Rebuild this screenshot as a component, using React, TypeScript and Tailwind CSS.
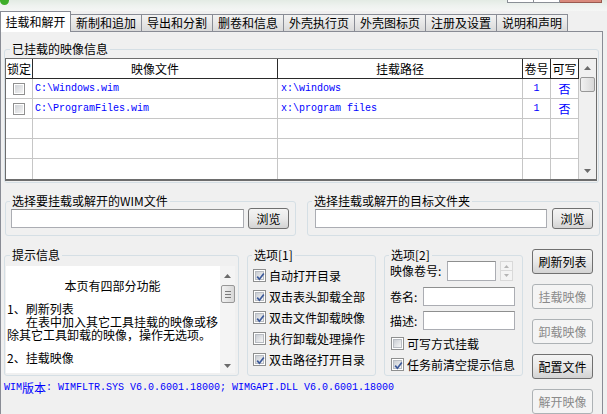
import React from 'react';

const tabs = ['挂载和解开', '新制和追加', '导出和分割', '删卷和信息', '外壳执行页', '外壳图标页', '注册及设置', '说明和声明'];

const images = [
  { file: 'C:\\Windows.wim', path: 'x:\\windows', vol: '1', rw: '否' },
  { file: 'C:\\ProgramFiles.wim', path: 'x:\\program files', vol: '1', rw: '否' },
  null,
  null,
  null,
];

const Check = ({ on }: { on?: boolean }) => (
  <span className="relative flex h-[13px] w-[13px] shrink-0 items-center justify-center border border-[#8e8f8f] bg-white">
    <span className="h-[9px] w-[9px] border border-[#b8bcc2] bg-linear-to-br from-[#c9cdd3] to-[#f6f6f6]" />
    {on && (
      <svg className="absolute left-[1px] top-[1px]" width="11" height="11" viewBox="0 0 11 11">
        <path d="M2.2 5.6 L4.4 8.2 L8.8 2.4" fill="none" stroke="#3d5a9a" strokeWidth="1.7" />
      </svg>
    )}
  </span>
);

const Arrow = ({ up }: { up?: boolean }) => (
  <svg width="7" height="4" viewBox="0 0 7 4">
    <path d={up ? 'M0 4 L3.5 0 L7 4 Z' : 'M0 0 L3.5 4 L7 0 Z'} fill="#6b6b6b" />
  </svg>
);

const Btn = ({ label, off }: { label: string; off?: boolean }) =>
  off ? (
    <div className="flex h-[25px] w-[61px] items-center justify-center rounded-[3px] border border-[#adb2b5] bg-[#f4f4f4] text-[#8a8a8a]">
      {label}
    </div>
  ) : (
    <div className="flex h-[25px] w-[61px] items-center justify-center rounded-[3px] border border-[#707070] bg-linear-to-b from-[#f4f4f4] via-[#e9e9e9] to-[#d3d3d3] text-black">
      {label}
    </div>
  );

const Browse = () => (
  <div className="flex h-[21px] w-[41px] items-center justify-center rounded-[3px] border border-[#707070] bg-linear-to-b from-[#f4f4f4] via-[#e9e9e9] to-[#d3d3d3]">
    浏览
  </div>
);

export default function App() {
  return (
    <div className="flex h-[414px] w-[607px] flex-col overflow-hidden bg-[#f0f0f0] font-['Noto_Sans_CJK_SC',sans-serif] text-[12px] leading-[14px] text-black">
      {/* window title remnant */}
      <div className="flex h-[12px] items-start bg-linear-to-b from-[#e3ebe4] via-[#eef2ef] to-[#f5f6f5]">
        <span className="mt-[-4px] h-[9px] w-[9px] rounded-full bg-[#3fae2a]" />
        <div className="ml-auto mr-[5px] flex h-[3px]">
          <span className="w-[27px] border border-t-0 border-[#8a8f96] bg-white" />
          <span className="w-[26px] border border-l-0 border-t-0 border-[#8a8f96] bg-white" />
          <span className="w-[42px] border border-l-0 border-t-0 border-[#9a5a50] bg-[#d98a7c]" />
        </div>
      </div>

      {/* tabs */}
      <div className="flex h-[20px] items-end">
        {tabs.map((t, i) =>
          i === 0 ? (
            <div key={t} className="relative z-10 -mb-px flex h-[21px] w-[71px] items-center justify-center border border-b-0 border-[#898c95] bg-white">
              {t}
            </div>
          ) : (
            <div key={t} className="flex h-[17px] w-[71px] items-center justify-center border border-b-0 border-l-0 border-[#898c95] bg-linear-to-b from-[#f3f3f3] to-[#dadada]">
              {t}
            </div>
          )
        )}
      </div>

      {/* panel */}
      <div className="flex w-[603px] flex-1 flex-col border border-b-0 border-[#898c95] bg-[#f0f0f0]">
        <fieldset className="ml-[3px] mt-[10px] w-[595px] rounded-[3px] border border-[#d5dfe5] pb-[1px]">
          <legend className="ml-[5px] px-[2px] leading-[14px]">已挂载的映像信息</legend>
          <div className="mt-[2px] flex w-[592px] border border-b-2 border-[#6d6d6d] bg-white">
            <div className="flex flex-1 flex-col">
              <div className="flex h-[20px] border-b border-[#2a2a2a] leading-[19px]">
                <div className="w-[27px] border-r border-[#2a2a2a] text-center">锁定</div>
                <div className="w-[245px] border-r border-[#2a2a2a] text-center">映像文件</div>
                <div className="w-[245px] border-r border-[#2a2a2a] text-center">挂载路径</div>
                <div className="w-[28px] border-r border-[#2a2a2a] text-center">卷号</div>
                <div className="w-[28px] border-r border-[#2a2a2a] text-center">可写</div>
              </div>
              {images.map((r, i) => (
                <div key={i} className={i < 4 ? 'flex h-[20px] border-b border-[#c6c6c6]' : 'flex h-[20px]'}>
                  <div className="flex w-[27px] items-center justify-center border-r border-[#c6c6c6]">
                    {r && (
                      <span className="flex h-[12px] w-[12px] items-center justify-center border border-[#909090] bg-white">
                        <span className="h-[8px] w-[8px] bg-linear-to-br from-[#cfd2d6] to-[#f4f4f4]" />
                      </span>
                    )}
                  </div>
                  <div className="flex w-[245px] items-center border-r border-[#c6c6c6] pl-[2px] font-['Liberation_Mono',monospace] text-[10px] text-[#0000ff]">
                    {r?.file}
                  </div>
                  <div className="flex w-[245px] items-center whitespace-pre border-r border-[#c6c6c6] pl-[3px] font-['Liberation_Mono',monospace] text-[10px] text-[#0000ff]">
                    {r?.path}
                  </div>
                  <div className="flex w-[28px] items-center justify-center border-r border-[#c6c6c6] font-['Liberation_Mono',monospace] text-[10px] text-[#0000ff]">
                    {r?.vol}
                  </div>
                  <div className="flex w-[28px] items-center justify-center border-r border-[#c6c6c6] text-[#0000ff]">
                    {r?.rw}
                  </div>
                </div>
              ))}
            </div>
            <div className="flex w-[17px] flex-col items-center bg-[#f0f0f0]">
              <div className="flex h-[18px] items-center">
                <Arrow up />
              </div>
              <div className="h-[15px] w-[15px] rounded-[2px] border border-[#979797] bg-linear-to-r from-[#f1f1f1] to-[#d8d8d8]" />
              <div className="mt-auto flex h-[17px] items-center">
                <Arrow />
              </div>
            </div>
          </div>
        </fieldset>

        <div className="mt-[11px] flex">
          <fieldset className="ml-[4px] w-[291px] rounded-[3px] border border-[#d5dfe5] pb-[6px]">
            <legend className="ml-[4px] px-[2px] leading-[14px]">选择要挂载或解开的WIM文件</legend>
            <div className="flex h-[21px] items-center gap-[4px] pl-[5px]">
              <div className="h-[19px] w-[233px] border border-[#abadb3] border-t-[#8e8f8f] bg-white" />
              <Browse />
            </div>
          </fieldset>
          <fieldset className="ml-[11px] w-[293px] rounded-[3px] border border-[#d5dfe5] pb-[6px]">
            <legend className="ml-[4px] px-[2px] leading-[14px]">选择挂载或解开的目标文件夹</legend>
            <div className="flex h-[21px] items-center gap-[5px] pl-[7px]">
              <div className="h-[19px] w-[232px] border border-[#abadb3] border-t-[#8e8f8f] bg-white" />
              <Browse />
            </div>
          </fieldset>
        </div>

        <div className="mt-[12px] flex pl-[3px]">
          <div className="flex flex-col">
            <div className="flex gap-[8px]">
              <fieldset className="h-[128px] w-[235px] rounded-[3px] border border-[#d5dfe5]">
                <legend className="ml-[5px] px-[2px] leading-[14px]">提示信息</legend>
                <div className="ml-[1px] mt-[4px] flex h-[107px] w-[229px] bg-white">
                  <div className="flex-1 overflow-hidden whitespace-nowrap pl-[1px] pt-[13px] leading-[13px]">
                    <div className="pr-[2px] text-center">本页有四部分功能</div>
                    <div className="h-[10px]" />
                    <div>1、刷新列表</div>
                    <div className="pl-[19px]">在表中加入其它工具挂载的映像或移</div>
                    <div>除其它工具卸载的映像，操作无选项。</div>
                    <div className="h-[10px]" />
                    <div>2、挂载映像</div>
                  </div>
                  <div className="flex w-[15px] flex-col items-center bg-[#f4f4f4]">
                    <div className="flex h-[19px] items-center">
                      <Arrow up />
                    </div>
                    <div className="flex h-[18px] w-[14px] flex-col items-center justify-center gap-[2px] rounded-[2px] border border-[#979797] bg-linear-to-r from-[#f1f1f1] to-[#d8d8d8]">
                      <span className="h-px w-[6px] bg-[#7a7a7a]" />
                      <span className="h-px w-[6px] bg-[#7a7a7a]" />
                      <span className="h-px w-[6px] bg-[#7a7a7a]" />
                    </div>
                    <div className="mt-auto flex h-[14px] items-center">
                      <Arrow />
                    </div>
                  </div>
                </div>
              </fieldset>

              <fieldset className="h-[128px] w-[129px] rounded-[3px] border border-[#d5dfe5]">
                <legend className="ml-[4px] px-[2px] leading-[14px]">选项[1]</legend>
                <div className="mt-[3px] flex flex-col pl-[5px]">
                  {[
                    ['自动打开目录', true],
                    ['双击表头卸载全部', true],
                    ['双击文件卸载映像', true],
                    ['执行卸载处理操作', false],
                    ['双击路径打开目录', true],
                  ].map(([l, on]) => (
                    <div key={l as string} className="flex h-[21px] items-center gap-[3px]">
                      <Check on={on as boolean} />
                      <span>{l as string}</span>
                    </div>
                  ))}
                </div>
              </fieldset>

              <fieldset className="h-[128px] w-[139px] rounded-[3px] border border-[#d5dfe5]">
                <legend className="ml-[4px] px-[2px] leading-[14px]">选项[2]</legend>
                <div className="-mt-px flex flex-col pl-[5px]">
                  <div className="flex h-[20px] items-center">
                    <span className="w-[57px]">映像卷号:</span>
                    <div className="h-[20px] w-[49px] border border-[#abadb3] border-t-[#8e8f8f] bg-white" />
                    <div className="ml-[4px] flex h-[20px] w-[13px] flex-col">
                      <div className="flex h-[10px] items-center justify-center border border-[#d9d9d9] bg-[#f4f4f4]">
                        <svg width="5" height="3" viewBox="0 0 5 3"><path d="M0 3 L2.5 0 L5 3 Z" fill="#b5b5b5" /></svg>
                      </div>
                      <div className="flex h-[10px] items-center justify-center border border-t-0 border-[#d9d9d9] bg-[#f4f4f4]">
                        <svg width="5" height="3" viewBox="0 0 5 3"><path d="M0 0 L2.5 3 L5 0 Z" fill="#b5b5b5" /></svg>
                      </div>
                    </div>
                  </div>
                  <div className="mt-[6px] flex h-[19px] items-center">
                    <span className="w-[33px]">卷名:</span>
                    <div className="h-[19px] w-[92px] border border-[#abadb3] border-t-[#8e8f8f] bg-white" />
                  </div>
                  <div className="mt-[5px] flex h-[19px] items-center">
                    <span className="w-[33px]">描述:</span>
                    <div className="h-[19px] w-[92px] border border-[#abadb3] border-t-[#8e8f8f] bg-white" />
                  </div>
                  <div className="mt-[3px] flex h-[21px] items-center gap-[3px] pl-[1px]">
                    <Check />
                    <span>可写方式挂载</span>
                  </div>
                  <div className="flex h-[21px] items-center gap-[3px] pl-[1px]">
                    <Check on />
                    <span>任务前清空提示信息</span>
                  </div>
                </div>
              </fieldset>
            </div>
            <div className="mt-[6px] flex items-center whitespace-pre font-['Liberation_Mono',monospace] text-[10px] leading-[12px] text-[#0000ff]">
              WIM<span className="font-['Noto_Sans_CJK_SC',sans-serif] text-[12px]">版本</span>: WIMFLTR.SYS V6.0.6001.18000; WIMGAPI.DLL V6.0.6001.18000
            </div>
          </div>

          <div className="ml-[9px] mt-[1px] flex flex-col gap-[10px]">
            <Btn label="刷新列表" />
            <Btn label="挂载映像" off />
            <Btn label="卸载映像" off />
            <Btn label="配置文件" />
            <Btn label="解开映像" off />
          </div>
        </div>
      </div>
    </div>
  );
}
